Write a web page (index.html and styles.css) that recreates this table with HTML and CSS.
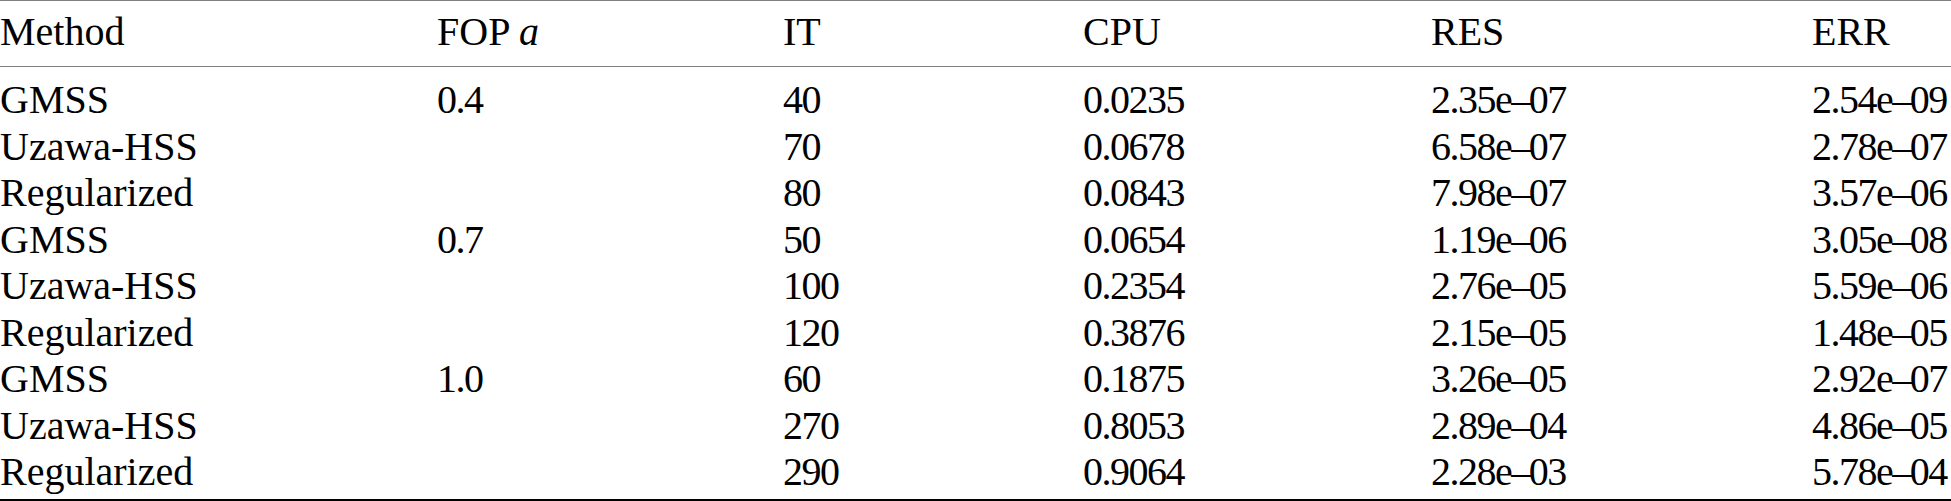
FILE: index.html
```html
<!DOCTYPE html>
<html lang="en">

<head>
    <meta charset="UTF-8">
    <meta name="viewport" content="width=device-width, initial-scale=1.0">
    <title>Results</title>

    <link rel="stylesheet" href="styles.css">
</head>

<body>
    <table class="results">
        <colgroup>
            <col class="col_method">
            <col class="col_fop">
            <col class="col_it">
            <col class="col_cpu">
            <col class="col_res">
            <col class="col_err">
        </colgroup>
        <thead>
            <tr>
                <th>Method</th>
                <th>FOP <i>a</i></th>
                <th>IT</th>
                <th>CPU</th>
                <th>RES</th>
                <th>ERR</th>
            </tr>
        </thead>
        <tbody>
            <tr><td>GMSS</td><td>0.4</td><td>40</td><td>0.0235</td><td>2.35e<span class="dash">–</span>07</td><td>2.54e<span class="dash">–</span>09</td></tr>
            <tr><td>Uzawa-HSS</td><td></td><td>70</td><td>0.0678</td><td>6.58e<span class="dash">–</span>07</td><td>2.78e<span class="dash">–</span>07</td></tr>
            <tr><td>Regularized</td><td></td><td>80</td><td>0.0843</td><td>7.98e<span class="dash">–</span>07</td><td>3.57e<span class="dash">–</span>06</td></tr>
            <tr><td>GMSS</td><td>0.7</td><td>50</td><td>0.0654</td><td>1.19e<span class="dash">–</span>06</td><td>3.05e<span class="dash">–</span>08</td></tr>
            <tr><td>Uzawa-HSS</td><td></td><td>100</td><td>0.2354</td><td>2.76e<span class="dash">–</span>05</td><td>5.59e<span class="dash">–</span>06</td></tr>
            <tr><td>Regularized</td><td></td><td>120</td><td>0.3876</td><td>2.15e<span class="dash">–</span>05</td><td>1.48e<span class="dash">–</span>05</td></tr>
            <tr><td>GMSS</td><td>1.0</td><td>60</td><td>0.1875</td><td>3.26e<span class="dash">–</span>05</td><td>2.92e<span class="dash">–</span>07</td></tr>
            <tr><td>Uzawa-HSS</td><td></td><td>270</td><td>0.8053</td><td>2.89e<span class="dash">–</span>04</td><td>4.86e<span class="dash">–</span>05</td></tr>
            <tr><td>Regularized</td><td></td><td>290</td><td>0.9064</td><td>2.28e<span class="dash">–</span>03</td><td>5.78e<span class="dash">–</span>04</td></tr>
        </tbody>
    </table>
</body>

</html>
```

FILE: styles.css
```css
body {
    margin: 0;
    background-color: #fff;
}

.results {
    width: 1951px;
    table-layout: fixed;
    border-collapse: separate;
    border-spacing: 0;

    font-family: "Liberation Serif", "Times New Roman", serif;
    font-size: 40px;
    line-height: 46.5px;
    color: #000;

    border-top: 1px solid #7f7f7f;
    border-bottom: 2px solid #000;
}

.col_method { width: 437px; }
.col_fop { width: 346px; }
.col_it { width: 300px; }
.col_cpu { width: 348px; }
.col_res { width: 381px; }
.col_err { width: 139px; }

.results th,
.results td {
    text-align: left;
    font-weight: normal;
    padding: 0;
    white-space: nowrap;
}

.results th {
    padding-top: 8px;
    padding-bottom: 10.5px;
    border-bottom: 1px solid #7f7f7f;
}

/* numbers in the source are set tighter than the labels */
.results td + td {
    letter-spacing: -1.5px;
}

.dash {
    letter-spacing: -2.5px;
}

.results tbody tr:first-child td {
    padding-top: 10px;
}

.results tbody tr:last-child td {
    padding-bottom: 3px;
}
```
